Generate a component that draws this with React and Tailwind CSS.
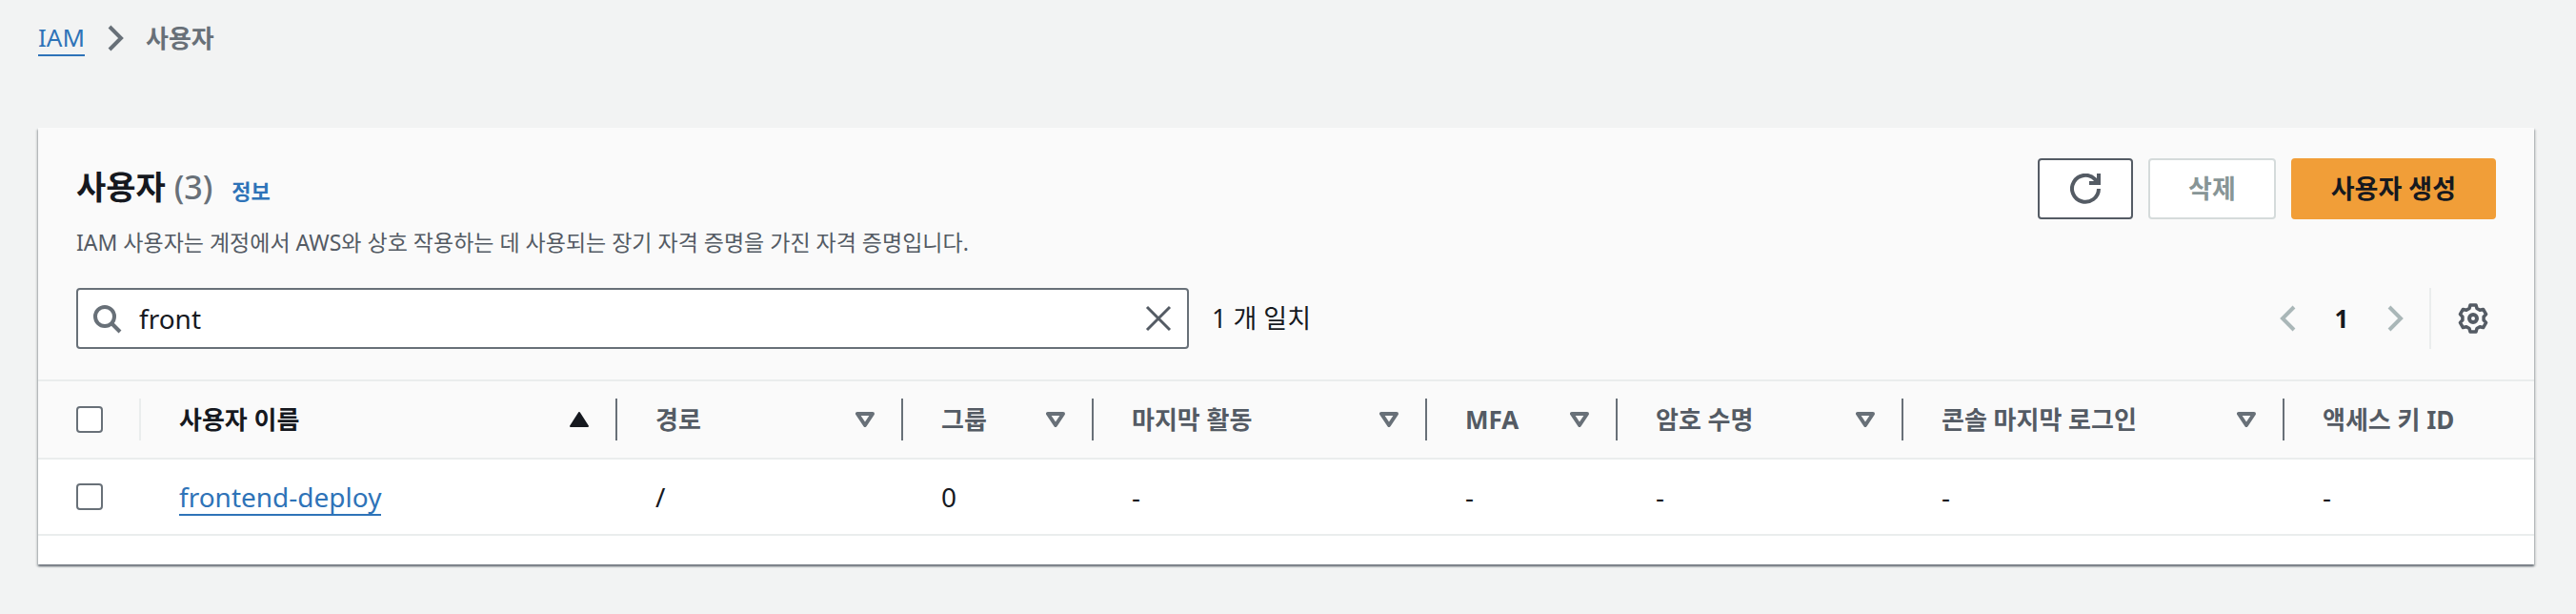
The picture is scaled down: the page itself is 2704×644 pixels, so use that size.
import { useState } from 'react';
import clsx from 'clsx';

const columns = [
  { key: 'name',      label: '사용자 이름',        width: 'w-[500px]', sorted: true },
  { key: 'path',      label: '경로',               width: 'w-[300px]' },
  { key: 'groups',    label: '그룹',               width: 'w-[200px]' },
  { key: 'activity',  label: '마지막 활동',        width: 'w-[350px]' },
  { key: 'mfa',       label: 'MFA',                width: 'w-[200px]' },
  { key: 'pwAge',     label: '암호 수명',          width: 'w-[300px]' },
  { key: 'lastLogin', label: '콘솔 마지막 로그인', width: 'w-[400px]' },
  { key: 'accessKey', label: '액세스 키 ID',       last: true },
];

const users = [
  { name: 'frontend-deploy', path: '/', groups: 0, activity: '-', mfa: '-', pwAge: '-', lastLogin: '-', accessKey: '-' },
];

function Icon({ className, children }) {
  return (
    <svg viewBox="0 0 32 32" fill="none" stroke="currentColor" strokeWidth="4" className={clsx('size-8 shrink-0', className)} aria-hidden="true">
      {children}
    </svg>
  );
}

function SortIcon({ filled }) {
  return (
    <svg viewBox="0 0 20 16" className={clsx('w-5 h-4 shrink-0', filled ? 'text-[#16191f]' : 'text-[#687078]')} fill={filled ? 'currentColor' : 'none'} stroke="currentColor" strokeLinejoin="round" aria-hidden="true">
      {filled
        ? <path d="M10 1 L19 15 H1 Z" strokeWidth="2" />
        : <path d="M2 2 H18 L10 14 Z" strokeWidth="4" />}
    </svg>
  );
}

export default function App() {
  const [query, setQuery] = useState('front');
  const [selected, setSelected] = useState([]);

  const rows = users.filter(u => u.name.includes(query));
  const allSelected = rows.length > 0 && selected.length === rows.length;

  const toggle = (name) => {
    setSelected(selected.includes(name) ? selected.filter(n => n !== name) : [...selected, name]);
  };

  const btnCls = 'h-16 px-10 rounded-sm border-2 text-[27px] font-bold';
  const checkCls = 'block size-7 appearance-none rounded-sm border-2 border-[#687078] bg-white checked:bg-[#2e73b8]';
  const linkCls = 'text-[#2e73b8] border-b-2 border-[#2e73b8]';

  return (
    <div className="min-h-screen bg-[#f2f3f3] pl-10 pr-11 pt-5 pb-13 text-[26px] leading-10 text-[#16191f] font-['Noto_Sans','Noto_Sans_CJK_KR',sans-serif]">
      <nav aria-label="breadcrumb" className="flex items-center h-10">
        <a href="#iam" className={clsx(linkCls, 'leading-9')}>IAM</a>
        <Icon className="mx-4 text-[#687078]"><path d="M10 4 L22 16 L10 28" /></Icon>
        <span className="font-bold text-[#687078]">사용자</span>
      </nav>

      <main className="mt-[74px] bg-white shadow-[0_2px_2px_0_#687078,2px_2px_2px_0_#0000001a,-2px_2px_2px_0_#0000001a]">
        <div className="bg-[#fafafa] px-10 pt-8 pb-8">
          <div className="flex items-start justify-between">
            <div>
              <div className="flex items-baseline h-16 leading-[60px]">
                <h1 className="text-[34px] font-bold">
                  사용자 <span className="font-medium text-[#687078]">(3)</span>
                </h1>
                <a href="#info" className="ml-5 text-[22px] font-bold text-[#2e73b8]">정보</a>
              </div>
              <p className="mt-1 text-[23px] leading-10 text-[#545b64]">
                IAM 사용자는 계정에서 AWS와 상호 작용하는 데 사용되는 장기 자격 증명을 가진 자격 증명입니다.
              </p>
            </div>
            <div className="flex gap-4">
              <button type="button" aria-label="새로 고침" className="flex items-center justify-center w-[100px] h-16 rounded-sm border-2 border-[#545b64] bg-white text-[#545b64]">
                <Icon><path d="M30 16 A14 14 0 1 1 26 6 L30 10 M30 0 V10 H20" /></Icon>
              </button>
              <button type="button" disabled className={clsx(btnCls, 'border-[#d5dbdb] bg-white text-[#879596]')}>삭제</button>
              <button type="button" className={clsx(btnCls, 'border-[#f19e38] bg-[#f19e38]')}>사용자 생성</button>
            </div>
          </div>

          <div className="mt-7 flex items-center">
            <div className="flex items-center w-[1168px] h-16 pl-4 pr-3 rounded-sm border-2 border-[#687078] bg-white">
              <Icon className="text-[#687078]"><circle cx="12" cy="14" r="10" /><path d="M19 21 L28 30" /></Icon>
              <input
                type="text"
                aria-label="사용자 검색"
                value={query}
                onChange={e => setQuery(e.target.value)}
                className="flex-1 min-w-0 ml-4 text-[28px] outline-none"
              />
              <button type="button" aria-label="지우기" onClick={() => setQuery('')} className="text-[#545b64]">
                <Icon><path d="M2 4 L26 28 M26 4 L2 28" strokeWidth="3" /></Icon>
              </button>
            </div>
            <span className="ml-6 text-[27px]">{rows.length} 개 일치</span>

            <div className="ml-auto flex items-center">
              <button type="button" disabled aria-label="이전 페이지" className="text-[#aab7b8]">
                <Icon><path d="M22 4 L10 16 L22 28" /></Icon>
              </button>
              <span className="w-20 text-center font-bold">1</span>
              <button type="button" disabled aria-label="다음 페이지" className="text-[#aab7b8]">
                <Icon><path d="M10 4 L22 16 L10 28" /></Icon>
              </button>
              <span className="mx-5 w-[2px] h-16 bg-[#eaeded]" />
              <button type="button" aria-label="환경설정" className="mx-2 text-[#545b64]">
                <Icon>
                  <path d="M12 5.5 L13 2 H19 L20 5.5 L23.1 7.3 L26.6 6.4 L29.6 11.6 L27.1 14.2 V17.8 L29.6 20.4 L26.6 25.6 L23.1 24.7 L20 26.5 L19 30 H13 L12 26.5 L8.9 24.7 L5.4 25.6 L2.4 20.4 L4.9 17.8 V14.2 L2.4 11.6 L5.4 6.4 L8.9 7.3 Z" strokeLinejoin="round" strokeWidth="3.5" />
                  <circle cx="16" cy="16" r="4" />
                </Icon>
              </button>
            </div>
          </div>
        </div>

        <table className="w-full table-fixed border-collapse text-left">
          <thead>
            <tr className="h-[82px] bg-[#fafafa] border-y-2 border-[#eaeded]">
              <th className="w-[108px] p-0">
                <div className="flex items-center justify-between pl-10">
                  <input
                    type="checkbox"
                    aria-label="모두 선택"
                    checked={allSelected}
                    onChange={() => setSelected(allSelected ? [] : rows.map(u => u.name))}
                    className={checkCls}
                  />
                  <span className="w-[2px] h-11 bg-[#eaeded]" />
                </div>
              </th>
              {columns.map(col => (
                <th key={col.key} className={clsx('p-0 font-bold', col.width, !col.sorted && 'text-[#545b64]')}>
                  <div className="flex items-center pl-10">
                    <span className="flex-1 whitespace-nowrap">{col.label}</span>
                    {!col.last && <SortIcon filled={col.sorted} />}
                    {!col.last && <span className="ml-7 w-[2px] h-11 bg-[#687078]" />}
                  </div>
                </th>
              ))}
            </tr>
          </thead>
          <tbody>
            {rows.map(user => (
              <tr key={user.name} className="h-20 border-b-2 border-[#eaeded] text-[28px]">
                <td className="p-0 pl-10">
                  <input
                    type="checkbox"
                    aria-label={user.name}
                    checked={selected.includes(user.name)}
                    onChange={() => toggle(user.name)}
                    className={checkCls}
                  />
                </td>
                {columns.map(col => (
                  <td key={col.key} className="p-0 pl-10">
                    {col.key === 'name' ? <a href="#user" className={clsx(linkCls, 'inline-block leading-9')}>{user.name}</a> : user[col.key]}
                  </td>
                ))}
              </tr>
            ))}
          </tbody>
        </table>
        <div className="h-[30px]" />
      </main>
    </div>
  );
}
